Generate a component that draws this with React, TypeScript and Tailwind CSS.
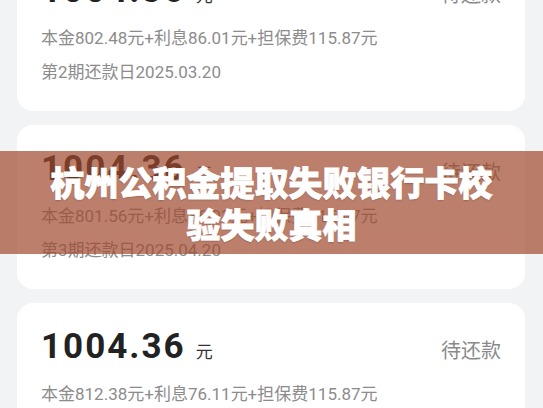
const bills = [
  { amount: '1004.36', principal: '802.48', interest: '86.01', fee: '115.87', term: 2, date: '2025.03.20' },
  { amount: '1004.36', principal: '801.56', interest: '86.93', fee: '115.87', term: 3, date: '2025.04.20' },
  { amount: '1004.36', principal: '812.38', interest: '76.11', fee: '115.87', term: 4, date: '2025.05.20' },
];

function BillCard({ bill }: { bill: (typeof bills)[number] }) {
  return (
    <div className="bg-white rounded-[16px] h-[164px] pt-[26px] px-[24px]">
      <div className="flex items-baseline h-[35px]">
        <span className="text-[35px] leading-none font-bold text-[#222] tracking-[2px]">{bill.amount}</span>
        <span className="ml-[10px] text-[17px] leading-none text-[#333]">元</span>
        <span className="ml-auto text-[20px] leading-none text-[#8a8a8a]">待还款</span>
      </div>
      <div className="mt-[18px] text-[17px] leading-[24px] text-[#8c8c8c] whitespace-nowrap">
        本金{bill.principal}元+利息{bill.interest}元+担保费{bill.fee}元
      </div>
      <div className="mt-[10px] text-[17px] leading-[24px] text-[#8c8c8c]">
        第{bill.term}期还款日{bill.date}
      </div>
    </div>
  );
}

export default function App() {
  return (
    <div
      className="relative w-[543px] h-[408px] overflow-hidden bg-[#f2f3f5]"
      style={{ fontFamily: 'Roboto, "Noto Sans CJK SC", sans-serif' }}
    >
      <div className="flex flex-col gap-[14px] pl-[17px] pr-[18px] -mt-[53px]">
        {bills.map((b) => (
          <BillCard key={b.term} bill={b} />
        ))}
      </div>

      {/* title banner over the list */}
      <div className="absolute left-0 right-0 top-[151px] h-[103px] bg-[#a0482e]/70 flex items-center justify-center">
        <h1
          className="w-[462px] text-center text-white text-[34px] leading-[42px] font-black [-webkit-text-stroke:0.8px_white] [text-shadow:0_1px_2px_rgba(0,0,0,0.25)]"
          style={{ fontFamily: '"Noto Sans CJK SC", sans-serif' }}
        >
          杭州公积金提取失败银行卡校验失败真相
        </h1>
      </div>
    </div>
  );
}
